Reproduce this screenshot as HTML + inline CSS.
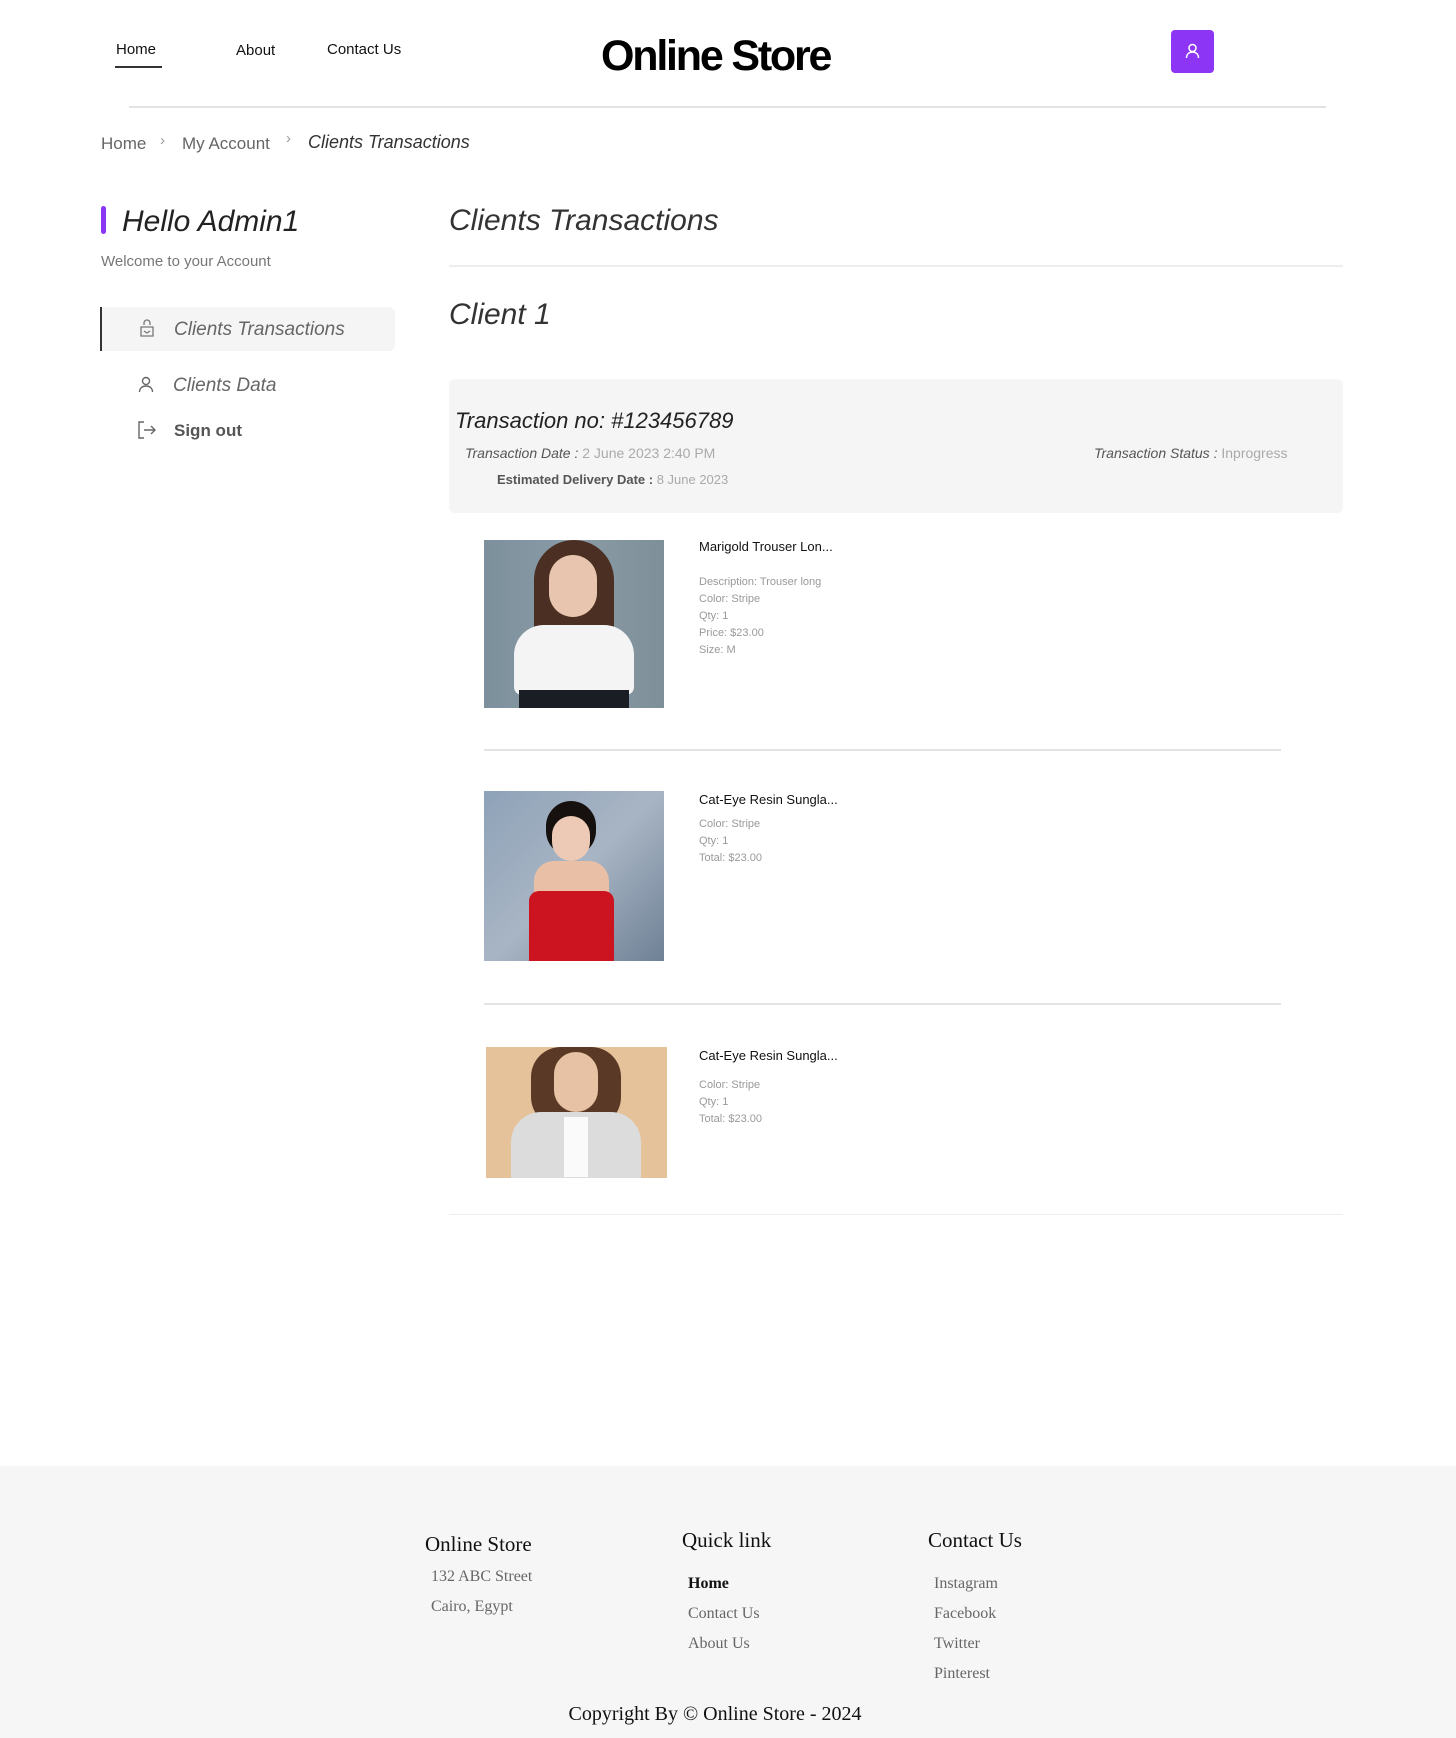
<!DOCTYPE html>
<html><head><meta charset="utf-8"><style>
*{margin:0;padding:0;box-sizing:border-box}
body{width:1456px;height:1738px;position:relative;background:#fff;font-family:"Liberation Sans",sans-serif;color:#222;overflow:hidden}
.a{position:absolute;white-space:nowrap}
.i{font-style:italic}
.g{color:#888}
.img{position:absolute;overflow:hidden}
.ser{font-family:"Liberation Serif",serif}
</style></head><body>
<div class="a" style="left:116px;top:41px;font-size:15px;color:#111">Home</div>
<div class="a" style="left:115px;top:66px;width:47px;height:2px;background:#333"></div>
<div class="a" style="left:236px;top:42px;font-size:15px;color:#111">About</div>
<div class="a" style="left:327px;top:41px;font-size:15px;color:#111">Contact Us</div>
<div class="a" style="left:601px;top:32px;font-size:43px;font-weight:bold;letter-spacing:-2.2px;color:#000">Online Store</div>
<div class="a" style="left:1171px;top:30px;width:43px;height:43px;background:#8c35f5;border-radius:4px"><svg width="43" height="43" viewBox="0 0 43 43"><circle cx="21.5" cy="18" r="3.5" fill="none" stroke="#fff" stroke-width="1.5"/><path d="M15.5 28c0-4 2.7-6 6-6s6 2 6 6" fill="none" stroke="#fff" stroke-width="1.5"/></svg></div>
<div class="a" style="left:129px;top:106px;width:1197px;height:2px;background:#e3e3e3"></div>

<div class="a g" style="left:101px;top:134px;font-size:17px;color:#666">Home</div>
<div class="a" style="left:160px;top:132px;font-size:15px;color:#999">›</div>
<div class="a" style="left:182px;top:134px;font-size:17px;color:#666">My Account</div>
<div class="a" style="left:286px;top:130px;font-size:15px;color:#999">›</div>
<div class="a i" style="left:308px;top:132px;font-size:18px;color:#333">Clients Transactions</div>

<div class="a" style="left:101px;top:206px;width:5px;height:28px;background:#8c35f5;border-radius:3px"></div>
<div class="a i" style="left:122px;top:205px;font-size:30px;color:#222">Hello Admin1</div>
<div class="a" style="left:101px;top:253px;font-size:15px;color:#777">Welcome to your Account</div>
<div class="a" style="left:100px;top:307px;width:295px;height:44px;background:#f5f5f5;border-left:2px solid #333;border-radius:0 6px 6px 0"></div>
<svg class="a" style="left:136px;top:318px" width="22" height="22" viewBox="0 0 22 22" fill="none" stroke="#777" stroke-width="1.3"><path d="M8 7V5a3 3 0 0 1 6 0v2"/><path d="M5 9h12v9H5z" /><path d="M8 13l3 2 3-2"/></svg>
<div class="a i" style="left:174px;top:319px;font-size:19px;color:#666">Clients Transactions</div>
<svg class="a" style="left:136px;top:374px" width="20" height="20" viewBox="0 0 20 20" fill="none" stroke="#666" stroke-width="1.4"><circle cx="10" cy="7" r="3.5"/><path d="M3.5 18c0-4 3-6 6.5-6s6.5 2 6.5 6"/></svg>
<div class="a i" style="left:173px;top:375px;font-size:19px;color:#666">Clients Data</div>
<svg class="a" style="left:136px;top:419px" width="22" height="22" viewBox="0 0 22 22" fill="none" stroke="#666" stroke-width="1.4"><path d="M8 3H3v16h5"/><path d="M8 11h11M15 7l4 4-4 4"/></svg>
<div class="a" style="left:174px;top:421px;font-size:17px;font-weight:bold;color:#555">Sign out</div>

<div class="a i" style="left:449px;top:204px;font-size:30px;color:#333">Clients Transactions</div>
<div class="a" style="left:449px;top:265px;width:894px;height:2px;background:#eee"></div>
<div class="a i" style="left:449px;top:298px;font-size:30px;color:#333">Client 1</div>

<div class="a" style="left:449px;top:379px;width:894px;height:134px;background:#f5f5f5;border-radius:6px"></div>
<div class="a i" style="left:455px;top:408px;font-size:22px;color:#222">Transaction no: #123456789</div>
<div class="a" style="left:465px;top:445px;font-size:14px;color:#555"><span class="i">Transaction Date :</span> <span style="color:#aaa">2 June 2023 2:40 PM</span></div>
<div class="a" style="left:1094px;top:445px;font-size:14px;color:#555"><span class="i">Transaction Status :</span> <span style="color:#aaa">Inprogress</span></div>
<div class="a" style="left:497px;top:472px;font-size:13px;color:#555;font-weight:bold">Estimated Delivery Date : <span style="color:#aaa;font-weight:normal">8 June 2023</span></div>

<div class="img" style="left:484px;top:540px;width:180px;height:168px;background:linear-gradient(90deg,#7c909c,#8a9ba6 50%,#7e8f99)">
<div style="position:absolute;left:50px;top:0;width:80px;height:100px;border-radius:40px 40px 10px 10px;background:#4b2f22"></div>
<div style="position:absolute;left:65px;top:15px;width:48px;height:62px;border-radius:24px;background:#e8c5ae"></div>
<div style="position:absolute;left:30px;top:85px;width:120px;height:70px;border-radius:30px 30px 8px 8px;background:#f4f4f4"></div>
<div style="position:absolute;left:35px;top:150px;width:110px;height:20px;background:#1b1d24"></div></div>
<div class="a" style="left:699px;top:539px;font-size:13px;color:#111">Marigold Trouser Lon...</div>
<div class="a" style="left:699px;top:574px;font-size:11px;color:#999;line-height:17px">Description: Trouser long<br>Color: Stripe<br>Qty: 1<br>Price: $23.00<br>Size: M</div>
<div class="a" style="left:484px;top:749px;width:797px;height:2px;background:#e3e3e3"></div>

<div class="img" style="left:484px;top:791px;width:180px;height:170px;background:linear-gradient(135deg,#8ea2b8,#a8b5c4 50%,#6f8196)">
<div style="position:absolute;left:62px;top:10px;width:50px;height:55px;border-radius:25px;background:#16110f"></div>
<div style="position:absolute;left:68px;top:25px;width:38px;height:45px;border-radius:19px;background:#eccab5"></div>
<div style="position:absolute;left:50px;top:70px;width:75px;height:50px;border-radius:20px;background:#e9c0a6"></div>
<div style="position:absolute;left:45px;top:100px;width:85px;height:70px;border-radius:10px 10px 0 0;background:#cc1420"></div></div>
<div class="a" style="left:699px;top:792px;font-size:13px;color:#111">Cat-Eye Resin Sungla...</div>
<div class="a" style="left:699px;top:816px;font-size:11px;color:#999;line-height:17px">Color: Stripe<br>Qty: 1<br>Total: $23.00</div>
<div class="a" style="left:484px;top:1003px;width:797px;height:2px;background:#e3e3e3"></div>

<div class="img" style="left:486px;top:1047px;width:181px;height:131px;background:#e6c29a">
<div style="position:absolute;left:45px;top:0;width:90px;height:80px;border-radius:30px;background:#5a3a26"></div>
<div style="position:absolute;left:68px;top:5px;width:44px;height:60px;border-radius:22px;background:#e8c2a4"></div>
<div style="position:absolute;left:25px;top:65px;width:130px;height:70px;border-radius:30px 30px 0 0;background:#dcdcdc"></div>
<div style="position:absolute;left:78px;top:70px;width:24px;height:60px;background:#fafafa"></div></div>
<div class="a" style="left:699px;top:1048px;font-size:13px;color:#111">Cat-Eye Resin Sungla...</div>
<div class="a" style="left:699px;top:1077px;font-size:11px;color:#999;line-height:17px">Color: Stripe<br>Qty: 1<br>Total: $23.00</div>
<div class="a" style="left:449px;top:1214px;width:894px;height:1px;background:#eee"></div>

<div class="a" style="left:0;top:1466px;width:1456px;height:272px;background:#f6f6f6"></div>
<div class="a ser" style="left:425px;top:1532px;font-size:21px;color:#111;font-weight:500">Online Store</div>
<div class="a ser" style="left:431px;top:1568px;font-size:16px;color:#666">132 ABC Street</div>
<div class="a ser" style="left:431px;top:1598px;font-size:16px;color:#666">Cairo, Egypt</div>
<div class="a ser" style="left:682px;top:1528px;font-size:21px;color:#111">Quick link</div>
<div class="a ser" style="left:688px;top:1575px;font-size:16px;color:#111;font-weight:bold">Home</div>
<div class="a ser" style="left:688px;top:1605px;font-size:16px;color:#666">Contact Us</div>
<div class="a ser" style="left:688px;top:1635px;font-size:16px;color:#666">About Us</div>
<div class="a ser" style="left:928px;top:1528px;font-size:21px;color:#111">Contact Us</div>
<div class="a ser" style="left:934px;top:1575px;font-size:16px;color:#666">Instagram</div>
<div class="a ser" style="left:934px;top:1605px;font-size:16px;color:#666">Facebook</div>
<div class="a ser" style="left:934px;top:1635px;font-size:16px;color:#666">Twitter</div>
<div class="a ser" style="left:934px;top:1665px;font-size:16px;color:#666">Pinterest</div>
<div class="a ser" style="left:0;width:1430px;text-align:center;top:1703px;font-size:20px;color:#111">Copyright By © Online Store - 2024</div>
</body></html>
